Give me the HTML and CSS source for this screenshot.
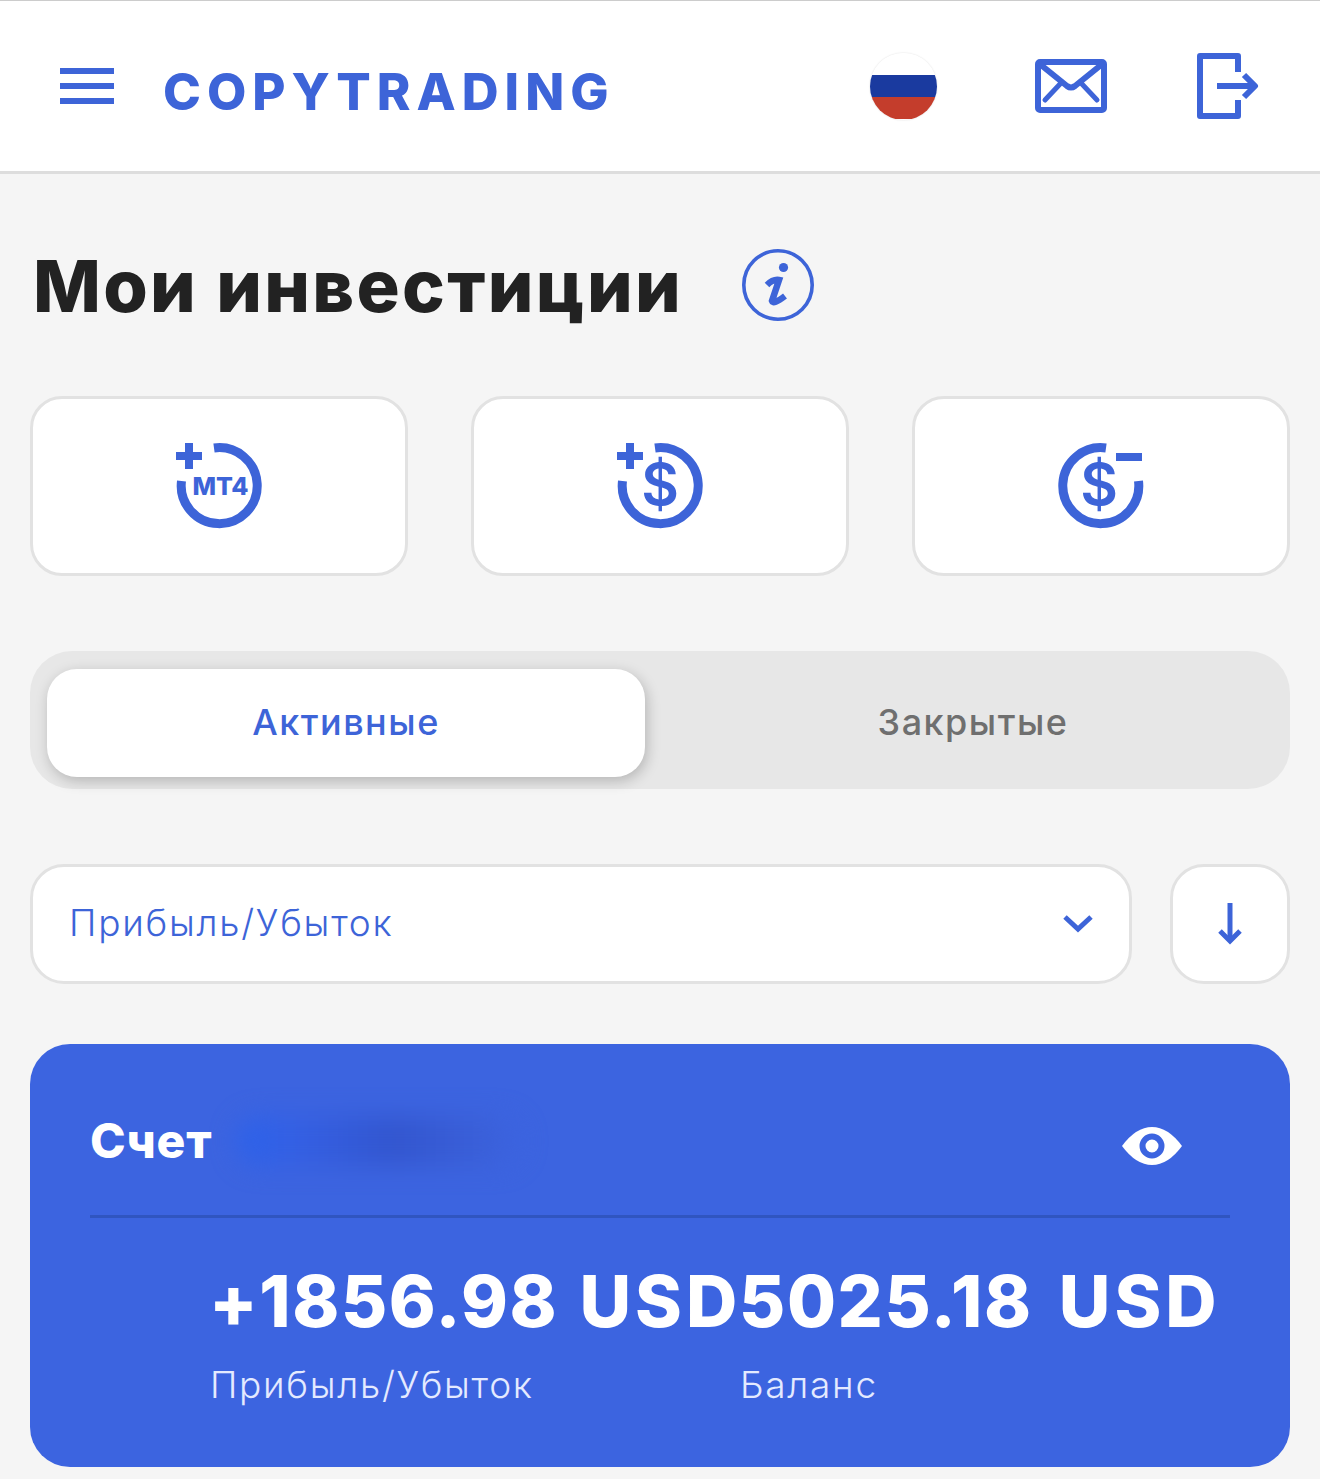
FILE: index.html
```html
<!DOCTYPE html>
<html lang="ru">
<head>
    <meta charset="UTF-8">
    <meta name="viewport" content="width=device-width, initial-scale=1.0">
    <title>Copytrading - Мои инвестиции</title>
    <link rel="stylesheet" href="styles.css">
</head>
<body>
    <header class="topbar">
        <svg class="menu-icon" viewBox="0 0 54 36"><path d="M0 3H54M0 18H54M0 33H54" fill="none" stroke="#3d64d8" stroke-width="6"/></svg>
        <div class="logo">COPYTRADING</div>
        <div class="flag"><span class="flag-white"></span><span class="flag-blue"></span><span class="flag-red"></span></div>
        <svg class="mail-icon" viewBox="0 0 72 54" fill="none" stroke="#3d64d8" stroke-width="6" stroke-linecap="round" stroke-linejoin="round">
            <rect x="3" y="3" width="66" height="48" rx="2"/>
            <path d="M6 6L32 27Q36 30 40 27L66 6"/>
            <path d="M26 24L10 41M46 24L62 41" stroke-width="5"/>
        </svg>
        <svg class="exit-icon" viewBox="0 0 62 66" fill="none" stroke="#3d64d8" stroke-width="6" stroke-linejoin="round">
            <path d="M41 19V3H3V63H41V47"/>
            <path d="M20 33H56"/>
            <path d="M47 22L58 33L47 44"/>
        </svg>
    </header>

    <main class="content">
        <div class="title-row">
            <h1>Мои инвестиции</h1>
            <svg class="info-icon" viewBox="0 0 72 72" fill="none" stroke="#3d64d8">
                <circle cx="36" cy="36" r="34.2" stroke-width="3.600"/>
                <circle cx="41.5" cy="18.5" r="4.6" fill="#3d64d8" stroke="none"/>
                <path d="M25 36Q31 30 37 31L30 52Q31 56 43 47" stroke-width="6.500"/>
            </svg>
        </div>

        <section class="actions">
            <div class="action">
                <svg class="action-icon" viewBox="-1 0 90 90" fill="none" stroke="#3d64d8">
                    <path d="M39 7A38 38 0 1 1 6.500 40" stroke-width="9"/>
                    <path d="M14 2V28M1 15H27" stroke-width="8"/>
                    <text class="mt4" x="45.500" y="54" text-anchor="middle">MT4</text>
                </svg>
            </div>
            <div class="action">
                <svg class="action-icon" viewBox="-1 0 90 90" fill="none" stroke="#3d64d8">
                    <path d="M39 7A38 38 0 1 1 6.500 40" stroke-width="9"/>
                    <path d="M14 2V28M1 15H27" stroke-width="8"/>
                    <text class="dollar" x="44" y="64" text-anchor="middle">$</text>
                </svg>
            </div>
            <div class="action">
                <svg class="action-icon" viewBox="1 0 90 90" fill="none" stroke="#3d64d8">
                    <path d="M51 7A38 38 0 1 0 83.500 40" stroke-width="9"/>
                    <path d="M61 16H87" stroke-width="8"/>
                    <text class="dollar" x="44" y="64" text-anchor="middle">$</text>
                </svg>
            </div>
        </section>

        <div class="tabs">
            <div class="tab tab-active">Активные</div>
            <div class="tab tab-closed">Закрытые</div>
        </div>

        <div class="filter-row">
            <div class="select">
                <span class="select-label">Прибыль/Убыток</span>
                <svg class="chevron" viewBox="0 0 30 20"><path d="M2 3L15 15L28 3" fill="none" stroke="#3d64d8" stroke-width="5"/></svg>
            </div>
            <div class="sort">
                <svg class="arrow-down" viewBox="0 0 24 42" fill="none" stroke="#3d64d8"><path d="M12 0V38" stroke-width="5"/><path d="M2 28L12 38L22 28" stroke-width="5"/></svg>
            </div>
        </div>

        <section class="card">
            <div class="card-head">
                <span class="card-name">Счет</span>
                <span class="blurred"></span>
                <svg class="eye-icon" viewBox="0 0 60 38">
                    <path d="M0 19Q14 0 30 0T60 19Q46 38 30 38T0 19Z" fill="#fff"/>
                    <circle cx="30" cy="19" r="9.500" fill="none" stroke="#3c64e0" stroke-width="6"/>
                </svg>
            </div>
            <div class="stats">
                <div class="stat">
                    <div class="stat-value">+1856.98 <span class="currency">USD</span></div>
                    <div class="stat-label">Прибыль/Убыток</div>
                </div>
                <div class="stat">
                    <div class="stat-value">5025.18 <span class="currency">USD</span></div>
                    <div class="stat-label">Баланс</div>
                </div>
            </div>
        </section>
    </main>
</body>
</html>
```

FILE: styles.css
```css
body {
    font-family: Inter, "Noto Sans", sans-serif;
    margin: 0;
    padding: 0;
    background-color: #f5f5f5;
    color: #222;
    overflow: hidden;
}
.topbar {
    display: flex;
    align-items: center;
    height: 170px;
    padding: 0 61px 0 60px;
    background: white;
    border-top: 1px solid #ccc;
    border-bottom: 3px solid #ddd;
}
.menu-icon {
    width: 54px;
    height: 36px;
}
.logo {
    margin: 11px 0 0 49px;
    font-size: 51px;
    font-weight: 800;
    letter-spacing: 6px;
    color: #3d64d8;
}
.flag {
    display: flex;
    flex-direction: column;
    width: 67px;
    height: 67px;
    margin-left: auto;
    border-radius: 50%;
    overflow: hidden;
    box-shadow: 0 0 2px rgba(0,0,0,0.15);
}
.flag span {
    flex: 1;
}
.flag-white { background: white; }
.flag-blue { background: #1a3a9f; }
.flag-red { background: #c43d2c; }
.mail-icon {
    width: 72px;
    height: 54px;
    margin-left: 98px;
}
.exit-icon {
    width: 62px;
    height: 66px;
    margin-left: 90px;
}
.content {
    padding: 0 30px;
}
.title-row {
    display: flex;
    align-items: center;
    height: 222px;
}
h1 {
    margin: 2px 0 0 3px;
    font-size: 72px;
    font-weight: 800;
    letter-spacing: 2.3px;
    line-height: 1;
}
.info-icon {
    width: 72px;
    height: 72px;
    margin-left: 59px;
}
.actions {
    display: grid;
    grid-template-columns: repeat(3, 378px);
    justify-content: space-between;
}
.action {
    display: flex;
    align-items: center;
    justify-content: center;
    height: 180px;
    background: white;
    border: 3px solid #e2e2e2;
    border-radius: 32px;
    box-sizing: border-box;
}
.action-icon {
    width: 90px;
    height: 90px;
}
.mt4 {
    fill: #3d64d8;
    stroke: none;
    font-size: 25px;
    font-weight: 800;
}
.dollar {
    fill: #3d64d8;
    stroke: none;
    font-size: 58px;
    font-weight: 600;
}
.tabs {
    display: grid;
    grid-template-columns: 598px 1fr;
    height: 138px;
    margin-top: 75px;
    padding: 18px 17px 12px;
    background: #e7e7e7;
    border-radius: 42px;
    box-sizing: border-box;
}
.tab {
    display: flex;
    align-items: center;
    justify-content: center;
    padding-bottom: 2px;
    font-size: 36px;
    font-weight: 500;
    letter-spacing: 1.5px;
    color: #6f6f6f;
}
.tab-active {
    background: white;
    color: #3d64d8;
    border-radius: 30px;
    box-shadow: 2px 4px 14px rgba(0,0,0,0.22);
}
.tab-closed {
    padding-left: 28px;
}
.filter-row {
    display: grid;
    grid-template-columns: 1fr 120px;
    gap: 38px;
    margin-top: 75px;
}
.select, .sort {
    display: flex;
    align-items: center;
    height: 120px;
    background: white;
    border: 3px solid #e2e2e2;
    border-radius: 34px;
    box-sizing: border-box;
}
.select {
    justify-content: space-between;
    padding: 0 36px;
    font-size: 37px;
    font-weight: 300;
    letter-spacing: 1.75px;
    color: #3d64d8;
}
.select-label {
    padding-bottom: 4px;
}
.chevron {
    width: 30px;
    height: 20px;
}
.sort {
    justify-content: center;
}
.arrow-down {
    width: 24px;
    height: 42px;
}
.card {
    height: 423px;
    margin-top: 60px;
    padding: 0 60px;
    background: #3c64e0;
    border-radius: 40px;
    color: white;
    box-sizing: border-box;
}
.card-head {
    display: flex;
    align-items: center;
    height: 174px;
    padding-top: 22px;
    border-bottom: 3px solid #3055c0;
    box-sizing: border-box;
}
.card-name {
    font-size: 48px;
    font-weight: 800;
    letter-spacing: 0.8px;
}
.blurred {
    width: 285px;
    height: 50px;
    margin-left: 24px;
    background: linear-gradient(90deg, #2c62ea, #3460e4 20%, #3356cf 55%, #3a5fd8 85%, #3c64e0);
    border-radius: 25px;
    filter: blur(12px);
}
.eye-icon {
    width: 60px;
    height: 38px;
    margin: 10px 48px 0 auto;
}
.stats {
    display: grid;
    grid-template-columns: 530px auto;
    padding-left: 119px;
    margin-top: 40px;
}
.stat-value {
    font-size: 71px;
    font-weight: 800;
    letter-spacing: 1.6px;
    word-spacing: 4px;
    line-height: 86px;
    white-space: nowrap;
}
.stat + .stat .stat-value {
    word-spacing: 9px;
}
.currency {
    letter-spacing: 4px;
}
.stat-label {
    margin: 19px 0 0 1px;
    font-size: 37px;
    font-weight: 300;
    letter-spacing: 1.7px;
    line-height: 44px;
    color: #e4eaff;
}
```
